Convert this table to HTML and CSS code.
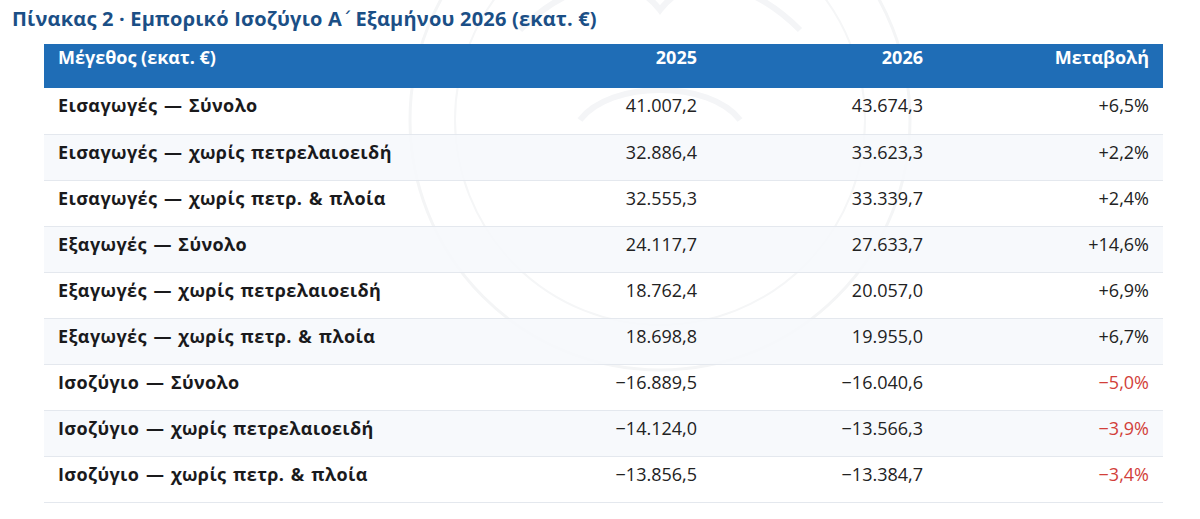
FILE: index.html
```html
<!DOCTYPE html>
<html lang="el">
<head>
<meta charset="utf-8">
<title>Πίνακας 2</title>
<link rel="stylesheet" href="styles.css">
</head>
<body>
<div class="page">
  <svg class="watermark" width="520" height="520" viewBox="0 0 520 520" aria-hidden="true">
    <circle cx="260" cy="260" r="250" fill="none" stroke="#f4f5f6" stroke-width="3"/>
    <circle cx="260" cy="260" r="205" fill="none" stroke="#f5f6f7" stroke-width="2"/>
    <path d="M120 170 C170 120 230 110 260 150 C290 110 350 120 400 170" fill="none" stroke="#f4f5f7" stroke-width="6"/>
    <path d="M180 260 C210 220 310 220 340 260" fill="none" stroke="#f4f5f7" stroke-width="6"/>
  </svg>
  <h1 class="title">Πίνακας 2 · Εμπορικό Ισοζύγιο Α<span class="tonos">΄</span> Εξαμήνου 2026 (εκατ. €)</h1>
  <table class="data">
    <thead>
      <tr>
        <th class="label">Μέγεθος (εκατ. €)</th>
        <th class="num">2025</th>
        <th class="num">2026</th>
        <th class="num">Μεταβολή</th>
      </tr>
    </thead>
    <tbody>
      <tr><td class="label">Εισαγωγές — Σύνολο</td><td class="num">41.007,2</td><td class="num">43.674,3</td><td class="num">+6,5%</td></tr>
      <tr><td class="label">Εισαγωγές — χωρίς πετρελαιοειδή</td><td class="num">32.886,4</td><td class="num">33.623,3</td><td class="num">+2,2%</td></tr>
      <tr><td class="label">Εισαγωγές — χωρίς πετρ. &amp; πλοία</td><td class="num">32.555,3</td><td class="num">33.339,7</td><td class="num">+2,4%</td></tr>
      <tr><td class="label">Εξαγωγές — Σύνολο</td><td class="num">24.117,7</td><td class="num">27.633,7</td><td class="num">+14,6%</td></tr>
      <tr><td class="label">Εξαγωγές — χωρίς πετρελαιοειδή</td><td class="num">18.762,4</td><td class="num">20.057,0</td><td class="num">+6,9%</td></tr>
      <tr><td class="label">Εξαγωγές — χωρίς πετρ. &amp; πλοία</td><td class="num">18.698,8</td><td class="num">19.955,0</td><td class="num">+6,7%</td></tr>
      <tr><td class="label">Ισοζύγιο — Σύνολο</td><td class="num">−16.889,5</td><td class="num">−16.040,6</td><td class="num neg">−5,0%</td></tr>
      <tr><td class="label">Ισοζύγιο — χωρίς πετρελαιοειδή</td><td class="num">−14.124,0</td><td class="num">−13.566,3</td><td class="num neg">−3,9%</td></tr>
      <tr><td class="label">Ισοζύγιο — χωρίς πετρ. &amp; πλοία</td><td class="num">−13.856,5</td><td class="num">−13.384,7</td><td class="num neg">−3,4%</td></tr>
    </tbody>
  </table>
</div>
</body>
</html>
```

FILE: styles.css
```css
html, body {
  margin: 0;
  padding: 0;
  background: #ffffff;
}

.page {
  position: relative;
  width: 1200px;
  height: 519px;
  overflow: hidden;
  padding: 0 12px;
  box-sizing: border-box;
  font-family: "Open Sans", "Noto Sans", sans-serif;
  color: #1d1d1f;
}

.watermark {
  position: absolute;
  left: 400px;
  top: -140px;
  z-index: 0;
  pointer-events: none;
}

.title {
  position: relative;
  z-index: 1;
  margin: 0;
  padding-top: 6px;
  height: 44px;
  box-sizing: border-box;
  font-size: 20px;
  font-weight: 700;
  line-height: 26px;
  letter-spacing: 0.2px;
  color: #1b4f86;
  white-space: nowrap;
}

.tonos {
  font-family: "DejaVu Sans", sans-serif;
  font-weight: 400;
  letter-spacing: -2px;
}

.data {
  position: relative;
  z-index: 1;
  margin-left: 32px;
  width: 1119px;
  border-collapse: collapse;
  table-layout: fixed;
}

.data th {
  background: #1f6db6;
  color: #ffffff;
  font-size: 18px;
  font-weight: 700;
  height: 44px;
  box-sizing: border-box;
  padding: 1px 14px 0;
  vertical-align: top;
  line-height: 24px;
}

.data th.label {
  width: 441px;
  text-align: left;
}

.data td {
  font-size: 18px;
  line-height: 24px;
  height: 46px;
  box-sizing: border-box;
  padding: 5px 14px 0;
  vertical-align: top;
  border-bottom: 1px solid #e4e8ee;
  white-space: nowrap;
}

.data td.label {
  font-weight: 700;
  text-align: left;
  letter-spacing: 0.4px;
  word-spacing: 1.5px;
  color: #1a1a1c;
}

.data .num {
  text-align: right;
}

.data td.num {
  font-weight: 400;
  color: #222222;
}

.data td.neg {
  color: #d23f3a;
}

.data tbody tr:nth-child(even) td {
  background: rgba(246, 248, 251, 0.85);
}
```
